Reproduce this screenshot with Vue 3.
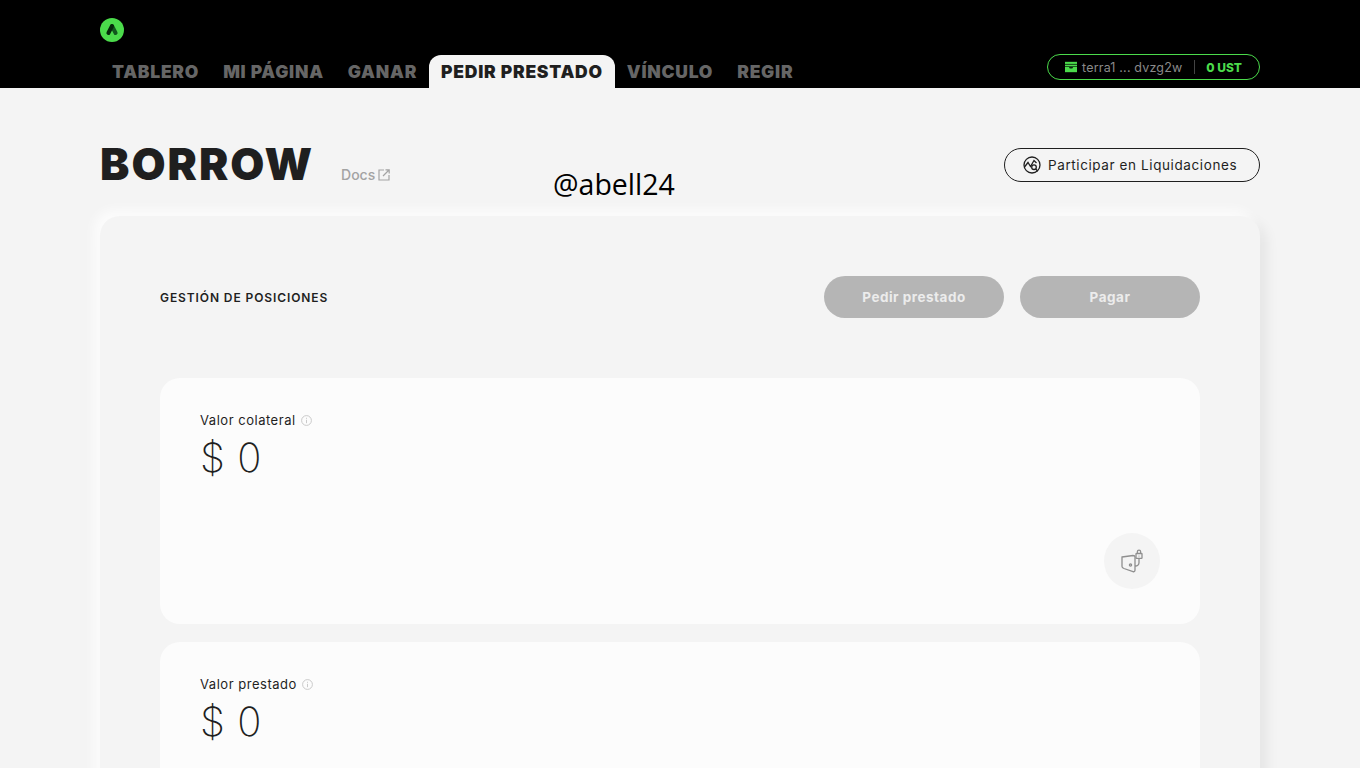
<template>
  <div class="app">
    <header class="topbar">
      <div class="inner">
        <svg class="logo" width="24" height="24" viewBox="0 0 24 24" fill="none" stroke-width="4" stroke-linecap="round">
          <circle cx="12" cy="12" r="12" fill="#4bdb4b" />
          <path d="M12 8 L15.6 15" stroke="#11581d" />
          <path d="M12 8 L8.4 15" stroke="#06280b" />
        </svg>
        <div class="navrow">
          <nav class="tabs">
            <a v-for="t in tabs" :key="t" class="tab" :class="{ active: t === active }">{{ t }}</a>
          </nav>
          <button class="wallet">
            <svg width="14" height="12" viewBox="0 0 14 12">
              <rect width="14" height="12" fill="#4bdb4b" />
              <rect y="2.4" width="14" height="1" fill="#0b2c0f" />
              <path d="M0 5 H14 V6 H9.5 L8.5 7.6 H5.5 L4.5 6 H0 Z" fill="#0b2c0f" />
            </svg>
            <span class="addr">terra1 ... dvzg2w</span>
            <span class="sep"></span>
            <strong class="bal">0 UST</strong>
          </button>
        </div>
      </div>
    </header>

    <main class="content">
      <div class="titlerow">
        <div class="titleleft">
          <h1>BORROW</h1>
          <a class="docs">
            Docs
            <svg width="12" height="12" viewBox="0 0 12 12" fill="none" stroke="#a3a3a3" stroke-width="1.2">
              <path d="M6 1 H1 V11 H11 V6" />
              <path d="M5 7 L11 1 M7.5 .8 H11.2 V4.5" />
            </svg>
          </a>
        </div>
        <button class="liq">
          <svg width="18" height="18" viewBox="0 0 18 18" fill="none" stroke="#1f1f1f" stroke-width="1.3">
            <circle cx="9" cy="9" r="8" />
            <path d="M1.5 11 L5 6.5 L7.5 10.5 L11 4.5 L13.5 7" />
            <circle cx="11" cy="11.2" r="2.3" />
            <path d="M12.7 13 L14.8 15.2" />
          </svg>
          Participar en Liquidaciones
        </button>
      </div>

      <section class="panel">
        <div class="panelhead">
          <h2>GESTIÓN DE POSICIONES</h2>
          <div class="actions">
            <button class="btn">Pedir prestado</button>
            <button class="btn">Pagar</button>
          </div>
        </div>

        <div class="card first">
          <div class="label">
            Valor colateral
            <svg class="info" width="11" height="11" viewBox="0 0 11 11" fill="none" stroke="#c4c4c4" stroke-width="0.9">
              <circle cx="5.5" cy="5.5" r="4.9" />
              <path d="M5.5 4.8 V8.2 M5.5 2.8 V3.8" />
            </svg>
          </div>
          <div class="value">$ 0</div>
          <div class="cardfoot">
            <div class="roundicon">
              <svg width="24" height="24" viewBox="0 0 24 24" fill="none" stroke="#8f8f8f" stroke-width="1.3">
                <path d="M2 8 L13 6.5 C14.5 6.5 15 7 15 8 V21 C15 22.5 14 23 13 22.6 L4 19.5 C2.8 19 2 18.4 2 17.5 Z" />
                <circle cx="10.5" cy="16" r="1.1" />
                <path d="M15 17 C18 17 19 15.5 19 13.5 V9" />
                <rect x="16" y="4.5" width="6" height="4.8" rx="0.6" />
                <path d="M17.4 4.5 V2.6 C17.4 .5 20.6 .5 20.6 2.6 V4.5" />
                <circle cx="19" cy="7" r="0.6" fill="#8f8f8f" stroke="none" />
              </svg>
            </div>
          </div>
        </div>

        <div class="card">
          <div class="label">
            Valor prestado
            <svg class="info" width="11" height="11" viewBox="0 0 11 11" fill="none" stroke="#c4c4c4" stroke-width="0.9">
              <circle cx="5.5" cy="5.5" r="4.9" />
              <path d="M5.5 4.8 V8.2 M5.5 2.8 V3.8" />
            </svg>
          </div>
          <div class="value">$ 0</div>
          <div class="cardfoot"></div>
        </div>
      </section>

      <div class="watermark">@abell24</div>
    </main>
  </div>
</template>

<script setup>
const tabs = ["TABLERO", "MI PÁGINA", "GANAR", "PEDIR PRESTADO", "VÍNCULO", "REGIR"];
const active = "PEDIR PRESTADO";
</script>

<style>
html,
body {
  margin: 0;
  overflow: hidden;
  background: #f4f4f4;
}
</style>

<style scoped>
.app {
  height: 768px;
  overflow: hidden;
  background: #f4f4f4;
  color: #1f1f1f;
  font-family: Inter, "Liberation Sans", sans-serif;
}
.topbar {
  height: 88px;
  background: #000;
}
.inner {
  width: 1160px;
  height: 88px;
  margin: 0 auto;
  display: flex;
  flex-direction: column;
  justify-content: space-between;
  padding-top: 18px;
  box-sizing: border-box;
}
.logo {
  display: block;
}
.navrow {
  display: flex;
  justify-content: space-between;
  align-items: flex-end;
}
.tabs {
  display: flex;
}
.tab {
  height: 33px;
  padding: 0 12px;
  display: flex;
  align-items: center;
  box-sizing: border-box;
  font-size: 17.5px;
  font-weight: 900;
  letter-spacing: 0.75px;
  color: #666;
  border-radius: 12px 12px 0 0;
  white-space: nowrap;
}
.tab.active {
  background: #f4f4f4;
  color: #1f1f1f;
}
.wallet {
  width: 213px;
  height: 26px;
  margin-bottom: 8px;
  padding: 0 17px;
  display: flex;
  align-items: center;
  background: #000;
  border: 1px solid #4bdb4b;
  border-radius: 13px;
  box-sizing: border-box;
  font-family: inherit;
}
.addr {
  margin-left: 5px;
  font-size: 12.5px;
  letter-spacing: 0.18px;
  color: #8a8a8a;
  white-space: nowrap;
}
.sep {
  width: 1px;
  height: 14px;
  margin: 0 11px 0 12px;
  background: #444;
}
.bal {
  font-size: 12px;
  font-weight: 800;
  color: #4bdb4b;
  white-space: nowrap;
}
.content {
  position: relative;
  width: 1160px;
  margin: 0 auto;
}
.titlerow {
  height: 128px;
  display: flex;
  justify-content: space-between;
  align-items: flex-start;
  padding-top: 50px;
  box-sizing: border-box;
}
.titleleft {
  display: flex;
  align-items: flex-end;
}
h1 {
  margin: 0;
  font-size: 44px;
  line-height: 53px;
  font-weight: 900;
  letter-spacing: 2px;
  color: #1f1f1f;
}
.docs {
  margin-left: 27px;
  margin-bottom: 8px;
  display: flex;
  align-items: center;
  gap: 3px;
  font-size: 14px;
  font-weight: 500;
  color: #a3a3a3;
}
.liq {
  width: 256px;
  height: 34px;
  margin-top: 10px;
  padding: 0 0 0 18px;
  display: flex;
  align-items: center;
  gap: 7px;
  background: transparent;
  border: 1px solid #1f1f1f;
  border-radius: 17px;
  font-family: inherit;
  font-size: 13.5px;
  font-weight: 400;
  letter-spacing: 0.6px;
  color: #1f1f1f;
  white-space: nowrap;
}
.panel {
  height: 620px;
  padding: 60px;
  box-sizing: border-box;
  border-radius: 20px;
  background: #f4f4f4;
  box-shadow: -6px -6px 12px rgba(255, 255, 255, 0.75), 6px 6px 14px rgba(0, 0, 0, 0.07);
}
.panelhead {
  height: 42px;
  display: flex;
  justify-content: space-between;
  align-items: center;
  margin-bottom: 60px;
}
h2 {
  margin: 0;
  font-size: 12px;
  font-weight: 600;
  letter-spacing: 0.9px;
  color: #1f1f1f;
}
.actions {
  display: flex;
  gap: 16px;
}
.btn {
  width: 180px;
  height: 42px;
  border: none;
  border-radius: 21px;
  background: #b5b5b5;
  color: #ececec;
  font-family: inherit;
  font-size: 13.5px;
  font-weight: 700;
  letter-spacing: 0.5px;
}
.card {
  height: 246px;
  padding: 34px 40px 35px;
  box-sizing: border-box;
  background: #fcfcfc;
  border-radius: 20px;
  display: flex;
  flex-direction: column;
}
.card.first {
  margin-bottom: 18px;
}
.label {
  display: flex;
  align-items: center;
  gap: 5px;
  height: 16px;
  font-size: 13px;
  font-weight: 400;
  letter-spacing: 0.52px;
  color: #1f1f1f;
}
.value {
  margin-top: 6px;
  font-size: 40px;
  line-height: 48px;
  font-weight: 200;
  word-spacing: 1px;
  color: #1f1f1f;
}
.cardfoot {
  margin-top: auto;
  display: flex;
  justify-content: flex-end;
}
.roundicon {
  width: 56px;
  height: 56px;
  border-radius: 50%;
  background: #f4f4f4;
  display: flex;
  align-items: center;
  justify-content: center;
}
.watermark {
  position: absolute;
  left: 453px;
  top: 76px;
  font-family: "Open Sans", sans-serif;
  font-size: 28.5px;
  line-height: 40px;
  color: #000;
}
</style>
